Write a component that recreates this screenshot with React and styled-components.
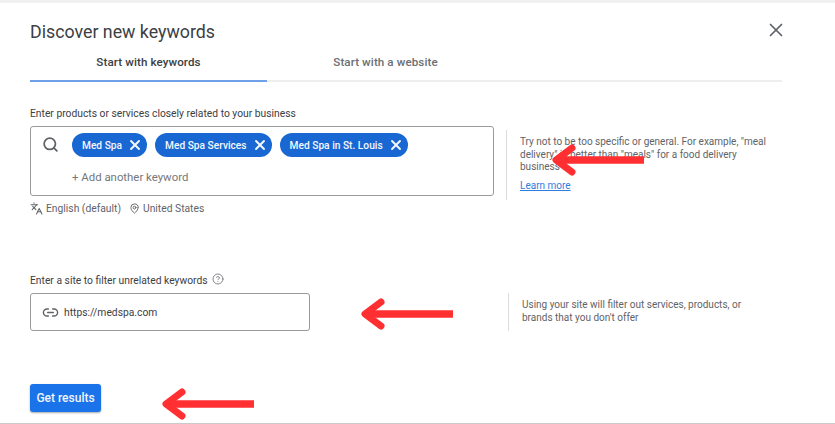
import React from "react";
import styled, { createGlobalStyle } from "styled-components";
import { X, Search, Link2, MapPin, Languages, CircleHelp } from "lucide-react";

const GlobalStyle = createGlobalStyle`
  html, body {
    margin: 0;
    padding: 0;
    background: #fff;
    font-family: Roboto, "Liberation Sans", sans-serif;
  }
`;

const Dialog = styled.div`
  position: relative;
  width: 835px;
  height: 424px;
  box-sizing: border-box;
  padding: 3px 53px 0 30px;
  background: #fff;
  overflow: hidden;
  &::before {
    content: "";
    position: absolute;
    inset: 0 0 auto 0;
    height: 3px;
    background: #f1f1f2;
  }
  &::after {
    content: "";
    position: absolute;
    inset: auto 0 0 0;
    height: 1px;
    background: #c9cacc;
  }
`;

const Header = styled.div`
  display: flex;
  justify-content: space-between;
  align-items: flex-start;
  height: 52px;
  box-sizing: border-box;
  padding-top: 18px;
`;

const Title = styled.h1`
  margin: 0;
  font-size: 17.8px;
  line-height: 21px;
  font-weight: 400;
  color: #3c4043;
`;

const CloseButton = styled.div`
  display: flex;
  margin: -2px -5px 0 0;
  color: #5f6368;
`;

const Tabs = styled.div`
  display: flex;
  height: 25px;
  border-bottom: 2px solid #eeeeef;
`;

const Tab = styled.div`
  width: 237px;
  height: 27px;
  box-sizing: border-box;
  text-align: center;
  font-size: 11.6px;
  line-height: 14px;
  font-weight: 500;
  letter-spacing: 0.1px;
  color: ${(p) => (p.$active ? "#3c4043" : "#6b6f73")};
  border-bottom: 2px solid ${(p) => (p.$active ? "#6f9fe8" : "transparent")};
`;

const FieldLabel = styled.div`
  display: flex;
  align-items: center;
  gap: 4px;
  font-size: 10.3px;
  line-height: 14px;
  color: #3c4043;
`;

const HelpIcon = styled(CircleHelp)`
  margin-top: -4px;
  color: #5f6368;
`;

const KeywordSection = styled.section`
  margin-top: 25px;
`;

const FieldRow = styled.div`
  display: flex;
  margin-top: 5px;
`;

const KeywordBox = styled.div`
  display: flex;
  width: 464px;
  height: 70px;
  box-sizing: border-box;
  padding: 6px 0 0 11px;
  border: 1px solid #9a9b9e;
  border-radius: 3px;
`;

const SearchIcon = styled(Search)`
  margin-top: 3px;
  color: #5f6368;
`;

const KeywordColumn = styled.div`
  margin-left: 13px;
`;

const Chips = styled.div`
  display: flex;
  gap: 8px;
`;

const Chip = styled.div`
  display: flex;
  align-items: center;
  gap: 5px;
  height: 24px;
  padding: 0 4px 0 10px;
  border-radius: 12px;
  background: #1967d2;
  color: #f4f8fe;
  font-size: 10.2px;
  font-weight: 500;
`;

const AddKeyword = styled.div`
  margin-top: 13px;
  font-size: 11.4px;
  line-height: 14px;
  color: #74777b;
`;

const Hint = styled.aside`
  width: 260px;
  box-sizing: border-box;
  margin: ${(p) => p.$top}px 0 -${(p) => p.$top}px ${(p) => p.$offset}px;
  height: ${(p) => p.$height}px;
  padding: 6px 0 0 13px;
  border-left: 1px solid #dadce0;
  font-size: 10px;
  line-height: 12.5px;
  color: #5f6368;
`;

const LearnMore = styled.a`
  display: block;
  margin-top: 6px;
  color: #2f7de1;
  text-decoration: underline;
`;

const LocaleRow = styled.div`
  display: flex;
  align-items: center;
  margin-top: 6px;
  height: 13px;
  font-size: 10.3px;
  color: #5f6368;
`;

const LocaleItem = styled.span`
  display: flex;
  align-items: center;
  gap: 3px;
  margin-right: 8px;
`;

const SiteSection = styled.section`
  margin-top: 59px;
`;

const SiteInput = styled.div`
  display: flex;
  align-items: center;
  gap: 5px;
  width: 280px;
  height: 38px;
  box-sizing: border-box;
  padding-left: 11px;
  border: 1px solid #9a9b9e;
  border-radius: 3px;
  font-size: 10.3px;
  color: #3c4043;
`;

const LinkIcon = styled(Link2)`
  color: #5f6368;
`;

const GetResults = styled.button`
  display: block;
  width: 71px;
  height: 28px;
  margin-top: 53px;
  padding: 0;
  border: 0;
  border-radius: 3px;
  background: #1a73e8;
  box-shadow: 0 1px 2px rgba(60, 64, 67, 0.45);
  color: #f1f6fe;
  font-family: inherit;
  font-size: 12px;
  font-weight: 500;
`;

//Red annotation arrows drawn over the screenshot
const Arrow = styled.svg`
  position: absolute;
  left: ${(p) => p.$x}px;
  top: ${(p) => p.$y}px;
`;

function RedArrow({ x, y }) {
  return (
    <Arrow $x={x} $y={y} width="96" height="36" viewBox="0 0 96 36">
      <path d="M94 18H6" stroke="#ff2f32" strokeWidth="7.5" fill="none" />
      <path
        d="M22 6L6 18L22 30"
        stroke="#ff2f32"
        strokeWidth="7"
        fill="none"
        strokeLinecap="round"
        strokeLinejoin="round"
      />
    </Arrow>
  );
}

const keywords = ["Med Spa", "Med Spa Services", "Med Spa in St. Louis"];

export default function App() {
  return (
    <>
      <GlobalStyle />
      <Dialog>
        <Header>
          <Title>Discover new keywords</Title>
          <CloseButton>
            <X size={22} strokeWidth={1.9} />
          </CloseButton>
        </Header>
        <Tabs>
          <Tab $active>Start with keywords</Tab>
          <Tab>Start with a website</Tab>
        </Tabs>

        <KeywordSection>
          <FieldLabel>Enter products or services closely related to your business</FieldLabel>
          <FieldRow>
            <KeywordBox>
              <SearchIcon size={17} strokeWidth={2.5} />
              <KeywordColumn>
                <Chips>
                  {keywords.map((k) => (
                    <Chip key={k}>
                      {k}
                      <X size={16} strokeWidth={2.8} />
                    </Chip>
                  ))}
                </Chips>
                <AddKeyword>+ Add another keyword</AddKeyword>
              </KeywordColumn>
            </KeywordBox>
            <Hint $offset={12} $top={4} $height={70}>
              Try not to be too specific or general. For example, "meal delivery" is better than "meals" for a food delivery business
              <LearnMore>Learn more</LearnMore>
            </Hint>
          </FieldRow>
          <LocaleRow>
            <LocaleItem>
              <Languages size={13} strokeWidth={1.9} />
              English (default)
            </LocaleItem>
            <LocaleItem>
              <MapPin size={11} strokeWidth={2} />
              United States
            </LocaleItem>
          </LocaleRow>
        </KeywordSection>

        <SiteSection>
          <FieldLabel>
            Enter a site to filter unrelated keywords
            <HelpIcon size={12} strokeWidth={1.5} />
          </FieldLabel>
          <FieldRow>
            <SiteInput>
              <LinkIcon size={17} strokeWidth={2} />
              https://medspa.com
            </SiteInput>
            <Hint $offset={198} $top={0} $height={38}>
              Using your site will filter out services, products, or brands that you don't offer
            </Hint>
          </FieldRow>
        </SiteSection>

        <GetResults>Get results</GetResults>

        <RedArrow x={550} y={142} />
        <RedArrow x={359} y={296} />
        <RedArrow x={160} y={386} />
      </Dialog>
    </>
  );
}
